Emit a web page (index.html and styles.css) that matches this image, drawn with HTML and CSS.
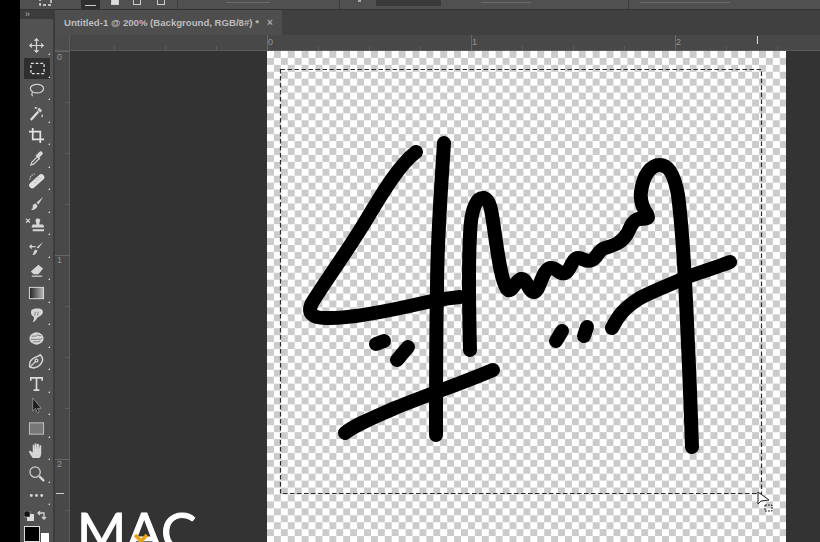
FILE: index.html
```html
<!DOCTYPE html>
<html lang="en">
<head>
<meta charset="utf-8">
<title>Untitled-1</title>
<link rel="stylesheet" href="styles.css">
</head>
<body>
<div class="app">
  <div class="rail"></div>
  <div class="main">
    <header class="options">
      <svg class="opt-marquee" viewBox="0 0 13 9"><rect x="1" y="-4" width="11" height="9" class="dash"/></svg>
      <span class="opt-btn active"><i></i></span>
      <span class="opt-btn b2nd"><i class="fill"></i></span>
      <span class="opt-btn b3rd"><i></i></span>
      <span class="opt-btn b4th"><i></i></span>
      <span class="sep sep1"></span>
      <span class="field f1"></span>
      <span class="sep sep2"></span>
      <span class="tick"></span>
      <span class="dark-field"></span>
      <span class="field f2"></span>
      <span class="sep sep3"></span>
      <span class="field f3"></span>
    </header>
    <div class="body">
      <aside class="tools">
        <div class="tools-head">&#187;</div>
        <div class="tool-list">
          <button class="tool"><svg viewBox="0 0 18 18"><path class="s" d="M9 2v14M2 9h14"/><path class="f" d="M9 1l3 3H6zM9 17l3-3H6zM1 9l3-3v6zM17 9l-3-3v6z"/></svg></button>
          <button class="tool on"><svg viewBox="0 0 18 18"><rect x="2" y="3.500" width="14" height="11" class="dash"/></svg></button>
          <button class="tool"><svg viewBox="0 0 18 18"><ellipse cx="9.500" cy="7" rx="7" ry="4.600" class="s"/><path class="s" d="M5 11c-1.500 1-1 3 0 4"/></svg></button>
          <button class="tool"><svg viewBox="0 0 18 18"><path class="w" d="M3 16L11 7"/><path class="f" d="M12 3l3 3-2 2-3-3z"/><path class="s" d="M7 3h3M15 10v3M8 2v2"/></svg></button>
          <button class="tool"><svg viewBox="0 0 18 18"><path class="b" d="M5 1v12h12M1 5h12v12"/></svg></button>
          <button class="tool"><svg viewBox="0 0 18 18"><path class="s" d="M3 16l1-3 6-6 2 2-6 6z"/><path class="f" d="M9 5l3-3c2-2 5 1 3 3l-3 3 1 1-1 1-4-4 1-1z"/></svg></button>
          <button class="tool"><svg viewBox="0 0 18 18"><path class="w2" d="M4.500 14L14 5.500"/><path class="t" d="M7 10.500l1 1M9.500 8l1 1M12 6l1 1"/><path class="dots" d="M2 8c0-3 2-5 5-6"/></svg></button>
          <button class="tool"><svg viewBox="0 0 18 18"><path class="f" d="M16 2l-5 8-2-2zM8 9l2 2c0 3-4 5-7 5 2-1 2-2 2-4 0-2 2-3 3-3z"/></svg></button>
          <button class="tool wide"><svg viewBox="0 0 22 18"><path class="xmark" d="M1 2l4 4M5 2L1 6"/><path class="f" d="M11 3a3 3 0 0 1 5 0c0 2-1 3-1 5h4l1 2v1H7v-1l1-2h4c0-2-1-3-1-5zM8 13h12v2H8z"/></svg></button>
          <button class="tool"><svg viewBox="0 0 18 18"><path class="f" d="M16 2l-5 7-2-1zM8 10l2 1c-1 3-3 5-5 5 1-2 1-5 3-6z"/><path class="s" d="M2 7h6M4 5L2 7l2 2"/></svg></button>
          <button class="tool"><svg viewBox="0 0 18 18"><path class="f" d="M11 3l5 4-5 6H6L3 10z"/><path class="s" d="M4 15h11"/></svg></button>
          <button class="tool"><svg viewBox="0 0 18 18"><defs><linearGradient id="grad"><stop offset="0" stop-color="#222"/><stop offset="1" stop-color="#bbb"/></linearGradient></defs><rect x="1.500" y="2.500" width="15" height="12" fill="url(#grad)" stroke="#ddd"/></svg></button>
          <button class="tool"><svg viewBox="0 0 18 18"><path class="f" d="M4 3c3-2 9-2 11 0 2 3 0 6-3 7l-2 1c-1 2-3 5-5 5 1-2 2-4 1-6-2 0-4-4-2-7z"/><path class="t" d="M8 5l-1 4M11 5l-1 4"/></svg></button>
          <button class="tool"><svg viewBox="0 0 18 18"><ellipse cx="9" cy="9" rx="7.500" ry="6.500" class="f"/><path class="t" d="M4 7c2-2 3 1 5-1s3 1 5 0M3 10c3-1 4 1 6 0s3 1 6-1M5 13c2-1 3 0 8-1"/></svg></button>
          <button class="tool"><svg viewBox="0 0 18 18"><path class="s2" d="M2 16c-1-4 1-8 5-10 3-1 5-2 6-3 3 3 3 5 2 7-1 3-4 6-9 7z"/><path class="s" d="M2 16l6-6"/><circle cx="9" cy="9" r="1.500" class="s"/></svg></button>
          <button class="tool"><svg viewBox="0 0 18 18"><path class="b2" d="M3 6V3h12v3M9 3v13M6 16h6"/></svg></button>
          <button class="tool"><svg viewBox="0 0 18 18"><path d="M5 1v14l3-3 2 5 2-1-2-4h4z" fill="#1e1e1e" stroke="#bbb" stroke-width=".6"/></svg></button>
          <button class="tool"><svg viewBox="0 0 18 18"><rect x="1.500" y="3" width="15" height="12" fill="#777" stroke="#c4c4c4"/></svg></button>
          <button class="tool"><svg viewBox="0 0 18 18"><path class="f" d="M5 17c-1-2-3-4-4-7l1-1 3 2V3h1.500l.5 5V1.500h2V8l.5-6h2V8l.8-4.500h1.700V12c0 3-1 4-2 5z"/></svg></button>
          <button class="tool"><svg viewBox="0 0 18 18"><circle cx="7.500" cy="7.500" r="5.500" class="s"/><path class="w" d="M12 12l5 5"/></svg></button>
          <button class="tool"><svg viewBox="0 0 18 18"><circle cx="3.500" cy="9" r="1.500" class="f"/><circle cx="9" cy="9" r="1.500" class="f"/><circle cx="14.500" cy="9" r="1.500" class="f"/></svg></button>
        </div>
        <div class="swatch-tools">
          <svg viewBox="0 0 10 10"><rect x="3" y="3" width="7" height="7" fill="#ddd"/><rect width="6" height="6" fill="#111" stroke="#ddd" stroke-width=".5"/></svg>
          <svg viewBox="0 0 10 10"><path class="s" d="M1 2h6v6M5 6l2 2 2-2M3 0L1 2l2 2"/></svg>
        </div>
        <div class="swatches"><span class="bg"></span><span class="fg"></span></div>
      </aside>
      <div class="gutter"></div>
      <section class="doc-area">
        <div class="tabs">
          <div class="tab"><span>Untitled-1 @ 200% (Background, RGB/8#) *</span><b>&#215;</b></div>
        </div>
        <div class="ruler-h">
          <div class="corner"></div>
          <div class="ruler-track">
            <span class="label l0">0</span>
            <span class="label l1">1</span>
            <span class="label l2">2</span>
            <i class="marker"></i>
          </div>
        </div>
        <div class="work">
          <div class="ruler-v">
            <span class="vlabel v0">0</span>
            <span class="vlabel v1">1</span>
            <span class="vlabel v2">2</span>
            <i class="vmarker"></i>
          </div>
          <div class="pasteboard">
            <div class="canvas">
              <svg class="art" viewBox="267 51 519 491">
                <g class="ink">
                  <path d="M416 152C400 164 384 190 365 222C348 250 325 282 312 303C307 313 312 318 326 318C345 319 375 314 423 303C440 299 450 298 460 297"/>
                  <path d="M444 143C441 190 437 240 437 290C436 340 436 390 436 435"/>
                  <path d="M470 350C469 310 468 270 470 235C471 205 478 197 484 198C491 200 492 215 495 235C498 255 501 280 507 289C512 294 515 281 521 279C527 278 528 292 534 292C540 291 542 270 550 268C557 267 559 275 565 273C571 271 571 259 578 258C584 258 586 263 592 260C598 257 598 250 605 248C615 245 621 243 627 234C631 227 631 222 638 219C645 218 650 220 647 214C642 207 640 200 641 192C643 175 651 165 660 165C670 165 675 178 678 195C684 240 686 300 688 345C690 385 691 420 692 447"/>
                  <path d="M612 328C618 316 624 308 640 298C655 290 670 285 682 279C700 272 715 268 730 262"/>
                  <path d="M556 341L562 331"/>
                  <path d="M584 336L587 327"/>
                  <path d="M376 344L384 341"/>
                  <path d="M397 360L408 347"/>
                  <path d="M345 433C355 425 370 419 395 408C430 394 465 382 493 370"/>
                </g>
                <rect class="ants" x="280.500" y="69.500" width="481" height="424"/>
                <path class="cursor" d="M758 492v12l3-3 8-1z"/>
                <rect class="cursor-box" x="765" y="505" width="7" height="6"/>
              </svg>
            </div>
            <div class="brand"><span>MAC</span><svg viewBox="0 0 16 10"><path d="M2 2l6 6 6-6"/></svg></div>
          </div>
        </div>
      </section>
    </div>
  </div>
</div>
</body>
</html>
```
FILE: styles.css
```css
* { box-sizing: border-box; }
html, body { margin: 0; height: 100%; overflow: hidden; background: #000; }
body { font-family: "Liberation Sans", Arial, sans-serif; }

.app { display: flex; width: 820px; height: 542px; overflow: hidden; filter: blur(.45px); }
.rail { flex: 0 0 20px; background: #000; }
.main { flex: 1; display: flex; flex-direction: column; min-width: 0; }

.options { flex: 0 0 10px; display: flex; align-items: flex-start; background: #505050; border-bottom: 1px solid #333; overflow: hidden; }
.opt-marquee { flex: none; width: 13px; height: 9px; margin-left: 19px; }
.opt-btn { flex: none; height: 9px; display: flex; justify-content: center; }
.opt-btn i { width: 8px; height: 5px; border: 1px solid #ccc; border-top: 0; }
.opt-btn i.fill { background: #ddd; }
.opt-btn.active { width: 19px; margin-left: 29px; background: #2f2f2f; }
.opt-btn.active i { width: 11px; height: 6px; border: 0; border-bottom: 1px solid #ccc; }
.b2nd { margin-left: 11px; }
.b3rd { margin-left: 14px; }
.b4th { margin-left: 16px; }
.sep { flex: none; width: 1px; height: 9px; background: #3d3d3d; }
.sep1 { margin-left: 12px; }
.sep2 { margin-left: 69px; }
.sep3 { margin-left: 97px; }
.field { flex: none; height: 3px; border-bottom: 1px solid #6a6a6a; }
.f1 { width: 44px; margin-left: 48px; }
.f2 { width: 50px; margin-left: 40px; }
.f3 { width: 90px; margin-left: 11px; }
.tick { flex: none; width: 3px; height: 2px; margin-left: 18px; background: #aaa; }
.dark-field { flex: none; width: 65px; height: 6px; margin-left: 15px; background: #3a3a3a; }

.body { flex: 1; display: flex; min-height: 0; }

.tools { flex: 0 0 33px; display: flex; flex-direction: column; background: #525252; }
.tools-head { height: 10px; background: #3c3c3c; color: #aaa; font-size: 9px; line-height: 9px; padding-left: 5px; }
.tool-list { display: flex; flex-direction: column; align-items: stretch; padding-top: 15.500px; }
.tool { position: relative; height: 22.500px; padding: 0; border: 0; background: none; display: flex; align-items: center; justify-content: center; }
.tool svg { width: 17px; height: 17px; }
.tool.wide svg { width: 21px; margin-left: -2px; }
.tool.on { height: 20.500px; margin: 1px 3px 1px 4px; background: #2f2f2f; border-radius: 1px; }
.tool::after { content: ""; position: absolute; right: 3px; bottom: 2px; border: 1.500px solid transparent; border-right-color: #ccc; border-bottom-color: #ccc; }
.tool.on::after { right: 0; bottom: 1px; }

.s { fill: none; stroke: #d2d2d2; stroke-width: 1.300; }
.s2 { fill: #5a5a5a; stroke: #d8d8d8; stroke-width: 1.500; }
.f { fill: #d6d6d6; }
.w { fill: none; stroke: #dcdcdc; stroke-width: 2.400; }
.w2 { fill: none; stroke: #e0e0e0; stroke-width: 6.500; stroke-linecap: round; }
.b { fill: none; stroke: #e2e2e2; stroke-width: 1.800; }
.b2 { fill: none; stroke: #dcdcdc; stroke-width: 1.700; }
.t { fill: none; stroke: #6d6d6d; stroke-width: .9; }
.xmark { fill: none; stroke: #ddd; stroke-width: 1.300; }
.dots { fill: none; stroke: #c4c4c4; stroke-width: 1.500; stroke-dasharray: 1.200 1.200; }
.dash { fill: none; stroke: #e2e2e2; stroke-width: 1.400; stroke-dasharray: 3 2; }

.swatch-tools { display: flex; justify-content: space-between; padding: 1.500px 6px 0 4px; margin-top: 2px; }
.swatch-tools svg { width: 10px; height: 10px; }
.swatches { position: relative; height: 24px; }
.fg { position: absolute; left: 4px; top: 5px; width: 16px; height: 16px; background: #000; border: 1px solid #ddd; }
.bg { position: absolute; left: 21px; top: 12px; width: 8px; height: 10px; background: #fff; }

.gutter { flex: 0 0 2px; background: #3c3c3c; }

.doc-area { flex: 1; display: flex; flex-direction: column; min-width: 0; background: #333; }
.tabs { flex: 0 0 25px; display: flex; background: #404040; }
.tab { width: 227px; display: flex; align-items: center; gap: 8px; padding-left: 9px; background: #4e4e4e; color: #bdbdbd; font-size: 9.600px; font-weight: 700; white-space: nowrap; }
.tab b { font-size: 10px; color: #aaa; }

.ruler-h { flex: 0 0 16px; display: flex; background: #484848; border-bottom: 1px solid #5b5b5b; }
.corner { flex: 0 0 15px; background: #4c4c4c; border-right: 1px solid #5b5b5b; }
.ruler-track { position: relative; flex: 1; color: #949494; font-size: 9px;
  background-image:
    repeating-linear-gradient(90deg, transparent -6px, transparent 197px, #666 197px, #666 198px),
    repeating-linear-gradient(90deg, transparent -6px, transparent 44px, #5c5c5c 44px, #5c5c5c 45px);
  background-size: 100% 100%, 100% 4px;
  background-position: 0 0, 0 100%;
  background-repeat: no-repeat; }
.label { position: absolute; top: 2px; }
.l0 { left: 198px; }
.l1 { left: 402px; }
.l2 { left: 606px; }
.marker { position: absolute; left: 687px; top: 1px; width: 1px; height: 8px; background: #ddd; }

.work { flex: 1; display: flex; min-height: 0; }
.ruler-v { position: relative; flex: 0 0 15px; background-color: #484848; border-right: 1px solid #5b5b5b; color: #949494; font-size: 9px;
  background-image:
    repeating-linear-gradient(180deg, #666 0px, #666 1px, transparent 1px, transparent 204px),
    repeating-linear-gradient(180deg, #5c5c5c 0px, #5c5c5c 1px, transparent 1px, transparent 51px);
  background-size: 100% 100%, 4px 100%;
  background-position: 0 0, 100% 0;
  background-repeat: no-repeat; }
.vlabel { position: absolute; left: 2px; }
.v0 { top: 1px; }
.v1 { top: 204px; }
.v2 { top: 408px; }
.vmarker { position: absolute; left: 1px; top: 442px; width: 8px; height: 1px; background: #ccc; }

.pasteboard { position: relative; flex: 1; background: #333; padding-left: 197px; overflow: hidden; }
.canvas { position: relative; width: 519px; height: 491px; background-color: #fff; background-image: repeating-conic-gradient(#cbcbcb 0 25%, #fff 0 50%); background-size: 13.860px 13.860px; }
.art { position: absolute; inset: 0; width: 100%; height: 100%; }
.ink path { fill: none; stroke: #000; stroke-width: 14; stroke-linecap: round; stroke-linejoin: round; }
.ants { fill: none; stroke: #2a2a2a; stroke-width: 1.200; stroke-dasharray: 4.500 2.500; }
.cursor { fill: #fff; stroke: #222; stroke-width: 1; }
.cursor-box { fill: none; stroke: #222; stroke-width: 1; stroke-dasharray: 2 1; }

.brand { position: absolute; left: 7px; top: 452px; color: #fff; font-family: Lato, sans-serif; font-weight: 400; font-size: 53px; line-height: 56px; -webkit-text-stroke: 1px #fff; }
.brand svg { position: absolute; left: 56px; top: 30px; width: 16px; height: 10px; }
.brand svg path { fill: none; stroke: #e8a317; stroke-width: 3.500; }
```
